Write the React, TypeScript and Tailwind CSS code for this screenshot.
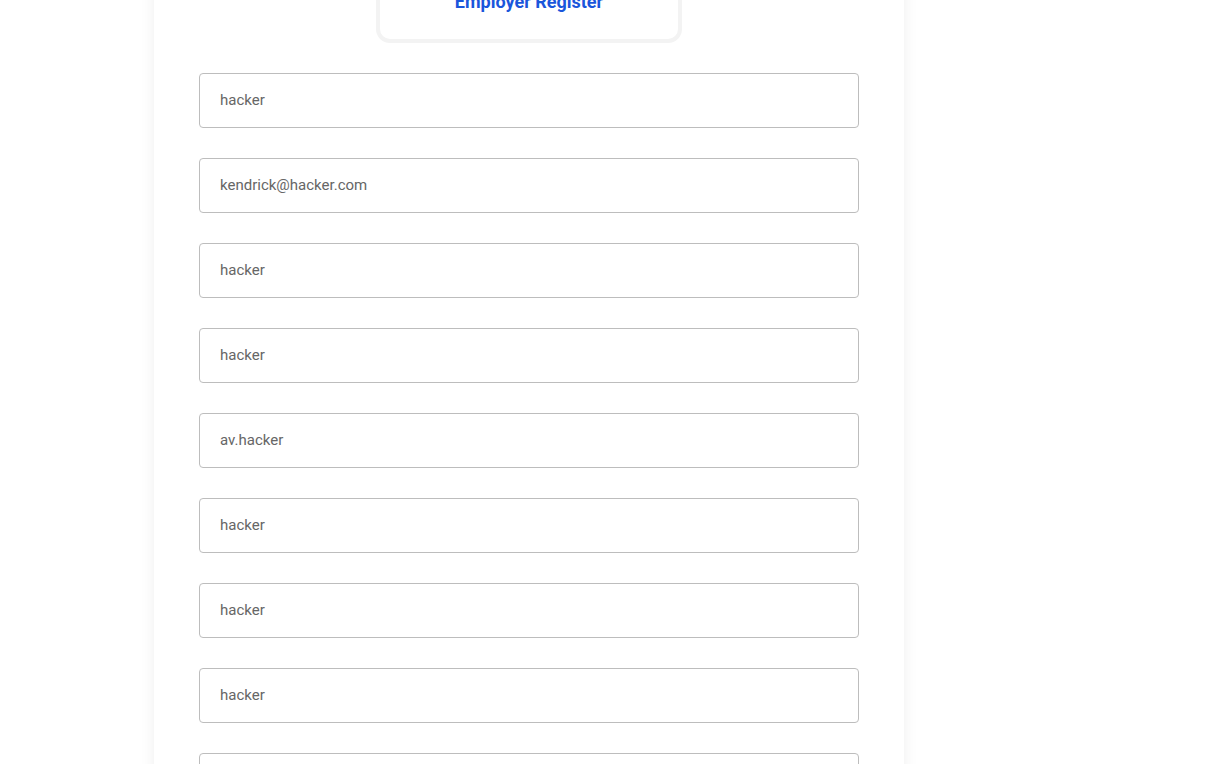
import React from "react";

const values = [
  "hacker",
  "kendrick@hacker.com",
  "hacker",
  "hacker",
  "av.hacker",
  "hacker",
  "hacker",
  "hacker",
  "",
];

export default function App() {
  return (
    <div className="h-[764px] w-[1232px] overflow-hidden bg-white" style={{ fontFamily: "Roboto, 'Liberation Sans', sans-serif" }}>
      <div className="-mt-[40px] ml-[154px] w-[750px] bg-white shadow-[0_0_14px_rgba(0,0,0,0.07)] pb-10">
        <div className="mx-auto flex h-[83px] w-[306px] items-center justify-center rounded-[14px] border-4 border-[#f3f3f3]">
          <span className="text-[18px] leading-[22px] font-bold text-[#1a56db]">Employer Register</span>
        </div>
        <div className="mt-[30px] flex flex-col gap-[30px] px-[45px]">
          {values.map((v, i) => (
            <div
              key={i}
              className="flex h-[55px] items-center rounded-[4px] border border-[#bdbdbd] px-[20px] text-[15px] text-[#666666]"
            >
              {v}
            </div>
          ))}
        </div>
      </div>
    </div>
  );
}
